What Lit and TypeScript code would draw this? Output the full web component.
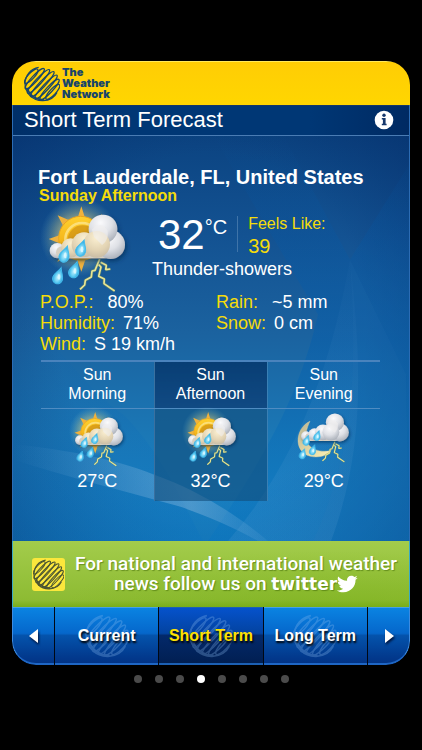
import { LitElement, html, css, svg } from "lit";
import { customElement, property, state } from "lit/decorators.js";
import { classMap } from "lit/directives/class-map.js";

/** Wire globe of the brand, drawn in the current text colour. */
@customElement("wire-globe")
class WireGlobe extends LitElement {
  static styles = css`
    :host { display: block; }
    svg { display: block; width: 100%; height: 100%; }
  `;
  private readonly coils = [
    [-40, 28], [-27, 41], [-13, 48], [1, 51], [15, 48], [28, 41], [40, 29],
  ];
  render() {
    return html`<svg viewBox="0 0 108 108" fill="none" stroke="currentColor" stroke-width="3.6" aria-hidden="true">
      <g transform="rotate(36 54 54)">
        ${this.coils.map(([d, r]) => svg`<ellipse cx=${54 + d} cy="54" rx="9" ry=${r} transform="rotate(7 ${54 + d} 54)"/>`)}
      </g>
      <path d="M3 52C4 82 26 105 57 104C78 103 92 93 99 79M3 52C4 28 20 8 44 4" stroke-width="4"/>
      <path d="M9 66C17 88 34 101 60 102" stroke-width="5"/>
    </svg>`;
  }
}

/** Thunder-shower picture, with a sun by day or a moon by night. */
@customElement("weather-icon")
class WeatherIcon extends LitElement {
  @property({ type: Boolean }) night = false;
  static styles = css`
    :host { display: block; }
    svg { display: block; width: 100%; height: 100%; overflow: visible; }
  `;
  private drop(x: number, y: number) {
    return svg`<path transform="translate(${x} ${y}) rotate(18)" d="M0 -27C5 -13 15 -5 15 7A15 16 0 0 1 -15 7C-15 -5 -5 -13 0 -27Z"
      fill="url(#rain)" stroke="#45bcec" stroke-width="3"/><ellipse cx="${x + 2}" cy="${y + 2}" rx="4" ry="9" fill="#e4faff" opacity=".8"/>`;
  }
  private sun() {
    return svg`
      <circle cx="178" cy="262" r="118" fill="url(#glow)"/>
      <path d="M184 170L196 208L172 208ZM113 197L146 211L130 230ZM86 268L118 257L118 281ZM112 336L128 302L148 321ZM184 366L170 324L198 324ZM246 194L235 228L218 212Z" fill="#f0b23c"/>
      <circle cx="182" cy="266" r="66" fill="url(#sun)" stroke="#e9a51e" stroke-width="3"/>
      <circle cx="186" cy="270" r="50" fill="none" stroke="#fbe58c" stroke-width="8" opacity=".8"/>
      <circle cx="188" cy="272" r="45" fill="#cf9214" opacity=".7"/>`;
  }
  private moon() {
    return svg`<path d="M131 213C55 248 50 375 150 382C190 384 222 370 231 352C180 364 130 346 116 310C106 285 115 245 131 213Z"
      fill="url(#moon)" stroke="#d8d0a0" stroke-width="2"/>`;
  }
  render() {
    const n = this.night;
    const front = n ? "puff" : "warm";
    const drops = n
      ? [[115, 305], [166, 283], [145, 350], [97, 369]]
      : [[134, 315], [184, 297], [115, 380], [163, 362]];
    const bolt = "M239 328L225 362L216 364L214 382L196 392L194 406L180 419M236 345L243 352L236 380L253 388L252 402L284 424M242 338L259 347L257 360L271 358";
    return html`<svg viewBox="60 160 270 270" role="img" aria-label="Thunder-showers">
      <defs>
        <radialGradient id="glow"><stop offset=".4" stop-color="#ffe680" stop-opacity=".6"/><stop offset=".7" stop-color="#c8d090" stop-opacity=".3"/><stop offset="1" stop-color="#7ac0d0" stop-opacity="0"/></radialGradient>
        <linearGradient id="sun" x1="0" y1="0" x2="0" y2="1"><stop stop-color="#ffd02e"/><stop offset="1" stop-color="#eda20c"/></linearGradient>
        <linearGradient id="moon" x1="0" y1="0" x2="1" y2="1"><stop stop-color="#b9b391"/><stop offset="1" stop-color="#fff3b6"/></linearGradient>
        <radialGradient id="puff" cx=".42" cy=".28" r=".78"><stop stop-color="#fafafc"/><stop offset=".5" stop-color="#dfe1e6"/><stop offset="1" stop-color="#a4aab4"/></radialGradient>
        <radialGradient id="warm" cx=".5" cy=".25" r=".8"><stop stop-color="#fbf0d2"/><stop offset=".6" stop-color="#e2d3b3"/><stop offset="1" stop-color="#c4b8a2"/></radialGradient>
        <radialGradient id="rain" cx=".5" cy=".6" r=".6"><stop stop-color="#c9f4ff"/><stop offset=".55" stop-color="#5bc9f1"/><stop offset="1" stop-color="#1b96d4"/></radialGradient>
        <filter id="shade" x="-30%" y="-30%" width="160%" height="170%"><feDropShadow dx="5" dy="7" stdDeviation="7" flood-color="#042a52" flood-opacity=".65"/></filter>
      </defs>
      ${n ? this.moon() : this.sun()}
      <g transform=${n ? "translate(10 -18)" : "translate(0 0)"}>
        <path d=${bolt} fill="none" stroke="#7f9a55" stroke-width="9" stroke-linejoin="bevel" opacity=".5"/>
        <path d=${bolt} fill="none" stroke="#ebe694" stroke-width="5" stroke-linejoin="bevel"/>
      </g>
      <g filter="url(#shade)" transform=${n ? "translate(0 -19)" : "translate(0 0)"}>
        <circle cx="112" cy="303" r="23" fill="url(#puff)"/>
        <rect x="108" y="290" width="166" height="36" rx="18" fill="#d5cfc2"/>
        <circle cx="152" cy="295" r="29" fill=${`url(#${front})`}/>
        <circle cx="192" cy="285" r="37" fill=${`url(#${front})`}/>
        <circle cx="272" cy="285" r="43" fill="url(#puff)"/>
        <circle cx="249" cy="238" r="43" fill="url(#puff)"/>
        <circle cx="230" cy="284" r="40" fill=${`url(#${front})`}/>
        <path d="M216 240C228 222 249 220 262 242C268 262 256 280 246 286L222 262Z" fill="#f0efee" opacity=".6"/>
      </g>
      ${drops.map(([x, y]) => this.drop(x, y))}
    </svg>`;
  }
}

interface Period { day: string; part: string; temp: string; night?: boolean }

@customElement("app-root")
class AppRoot extends LitElement {
  @state() private tab = "Short Term";

  private readonly tabs = ["Current", "Short Term", "Long Term"];
  private readonly periods: Period[] = [
    { day: "Sun", part: "Morning", temp: "27°C" },
    { day: "Sun", part: "Afternoon", temp: "32°C" },
    { day: "Sun", part: "Evening", temp: "29°C", night: true },
  ];

  static styles = css`
    :host {
      display: block;
      box-sizing: border-box;
      min-height: 100vh;
      padding: 61px 12px 20px;
      background: #000;
      color: #fff;
      font-family: "Liberation Sans", Arial, Helvetica, sans-serif;
    }
    * { box-sizing: border-box; }
    h1, h2, p, dl, dd { margin: 0; }
    button { margin: 0; padding: 0; border: 0; font: inherit; color: inherit; cursor: pointer; }

    .card { border-radius: 24px; overflow: hidden; background: #000; }
    .brand {
      display: flex;
      align-items: center;
      gap: 2px;
      height: 44px;
      padding: 0 12px;
      color: #17456b;
      background: linear-gradient(#ffcd05, #ffd600);
      border-top: 1px solid #ffe95c;
    }
    .brand-globe { width: 36px; height: 36px; }
    .brand-name { font: 900 11px/11px Inter, sans-serif; }
    .brand-name span { display: block; }

    .screen {
      position: relative;
      border: solid #2c6cb4;
      border-width: 0 1px;
      background:
        radial-gradient(ellipse at 50% 50%, rgba(0, 30, 90, 0) 55%, rgba(0, 30, 90, .4) 100%),
        linear-gradient(#093f7c, #135292 30%, #1b629f 52%, #1b78b6 76%, #1785c9 100%);
    }
    .waves { position: absolute; inset: 0; width: 100%; height: 100%; }
    .title {
      position: relative;
      display: flex;
      align-items: center;
      justify-content: space-between;
      height: 31px;
      padding: 0 15px 2px 11px;
      background: linear-gradient(90deg, #002f68, #003775 30%, #003775 75%, #002a62);
      border-top: 1px solid #12366a;
      border-bottom: 1px solid #4a7cb4;
    }
    .title h1 { font-size: 22px; line-height: 26px; font-weight: 400; }
    .info { width: 20px; height: 20px; background: none; }
    .info svg { display: block; }

    .report { position: relative; padding: 31px 28px 40px 25px; }
    .place { font-size: 20px; line-height: 20px; font-weight: 700; white-space: nowrap; }
    .yellow { color: #f5dc0a; }
    .when { padding-left: 1px; font-size: 16px; line-height: 18px; font-weight: 700; }
    .now { display: flex; gap: 22px; height: 87px; padding-left: 2px; }
    .now-icon { width: 90px; height: 90px; margin-top: -2px; }
    .now-data { padding-top: 6px; }
    .now-row { display: flex; padding-left: 6px; }
    .degrees { display: flex; font-size: 42px; line-height: 48px; }
    .unit { font-size: 20px; line-height: 32px; }
    .feels {
      margin-left: 10px;
      margin-top: 5px;
      padding-left: 10px;
      height: 36px;
      border-left: 1px solid #3f74a9;
      font-size: 16px;
      line-height: 16px;
      white-space: nowrap;
    }
    .feels strong { display: block; font-size: 20px; line-height: 28px; font-weight: 400; }
    .sky { font-size: 18px; line-height: 20px; }

    .facts { display: grid; grid-template-columns: 177fr 166fr; padding-left: 2px; font-size: 18px; line-height: 21px; }
    .fact { display: flex; gap: 8px; white-space: nowrap; }
    .fact.wide { gap: 14px; }

    .periods-wrap { padding: 0 1px 0 3px; }
    .periods { width: 100%; margin-top: 5px; table-layout: fixed; border-collapse: collapse; text-align: center; }
    .periods th {
      padding: 3px 0 5px;
      border-top: 2px solid #4a83bd;
      border-bottom: 1px solid #4f8cc2;
      font-size: 16px;
      line-height: 19px;
      font-weight: 400;
    }
    .periods th span { display: block; }
    .periods td { padding: 1px 0 9px; font-size: 18px; line-height: 21px; }
    .periods weather-icon { width: 57px; height: 57px; margin: 0 auto 4px; }
    .periods .on { border-left: 1px solid #3a709f; border-right: 1px solid #3a80b4; }
    .periods th.on { background: linear-gradient(#083e74, #104a83); }
    .periods td.on { background: rgba(18, 76, 122, .6); }

    .promo {
      display: flex;
      align-items: center;
      gap: 10px;
      min-height: 66px;
      padding: 0 12px 0 19px;
      border: 1px solid #39a9c4;
      border-width: 0 1px;
      color: #fff;
      text-decoration: none;
      background: radial-gradient(ellipse at 80% 100%, rgba(120, 175, 20, .4), rgba(150, 200, 60, 0) 60%), linear-gradient(#a3cc4b, #8dbb33 90%, #78ad1c);
    }
    .promo-logo { flex: none; width: 33px; height: 33px; padding: 1px; border-radius: 3px; color: #4a5532; background: #fbe73c; }
    .promo-text {
      flex: 1;
      text-align: center;
      font: 500 19px/20px Roboto, sans-serif;
      text-shadow: 1px 1px 1px rgba(70, 110, 10, .6);
      white-space: nowrap;
    }
    .twitter { font: 700 17px/20px "DejaVu Sans", sans-serif; }
    .bird { width: 22px; height: 18px; vertical-align: -3px; margin-left: -1px; }

    .tabs { display: grid; grid-template-columns: 42px 1fr 1fr 1fr 42px; gap: 1px; background: #000814; }
    .tab {
      display: grid;
      place-items: center;
      height: 58px;
      background: linear-gradient(#0a83e2, #0567cb 46%, #0453ac 50%, #023a8e 88%, #023385);
      border-top: 1px solid #45a0e6;
      border-bottom: 2px solid #1e66c4;
      font-size: 16px;
      line-height: 20px;
      font-weight: 700;
      text-shadow: 1px 2px 2px #000;
      white-space: nowrap;
    }
    .tab > * { grid-area: 1 / 1; }
    .tab wire-globe { width: 44px; height: 44px; color: #8cbcf0; opacity: .3; }
    .label { position: relative; }
    .tab.on { color: #ffe100; background: linear-gradient(#0552cc, #0343a0 46%, #03296a 50%, #011f52); border-color: #1c60b4; }
    .tab.prev { border-radius: 0 0 0 24px; border-left: 1px solid #3d8be0; }
    .tab.next { border-radius: 0 0 24px 0; border-right: 1px solid #3d8be0; }
    .tab svg { filter: drop-shadow(1px 2px 1px #00153f); }

    .pages { display: flex; justify-content: center; gap: 13px; padding-top: 10px; }
    .page { width: 8px; height: 8px; border-radius: 50%; background: #4b4b4b; }
    .page.on { background: #fff; }
  `;

  private fact(name: string, value: string, wide = false) {
    return html`<div class=${classMap({ fact: true, wide })}><dt class="yellow">${name}</dt><dd>${value}</dd></div>`;
  }

  render() {
    return html`
      <main class="card">
        <header class="brand">
          <wire-globe class="brand-globe"></wire-globe>
          <div class="brand-name"><span>The</span><span>Weather</span><span>Network</span></div>
        </header>
        <div class="screen">
          <svg class="waves" viewBox="0 0 396 437" preserveAspectRatio="none" aria-hidden="true">
            <defs>
              <linearGradient id="ray" x1="0" y1="0" x2="0" y2="1"><stop stop-color="#0058a8" stop-opacity="0"/><stop offset=".5" stop-color="#005cae" stop-opacity=".4"/><stop offset="1" stop-color="#0074c4" stop-opacity=".25"/></linearGradient>
              <linearGradient id="sheen" x1="0" y1="0" x2="1" y2="0"><stop stop-color="#8fc0e8" stop-opacity="0"/><stop offset=".7" stop-color="#a9c8e6" stop-opacity=".35"/><stop offset="1" stop-color="#8fc0e8" stop-opacity=".08"/></linearGradient>
              <linearGradient id="left" x1="0" y1="0" x2="1" y2="1"><stop stop-color="#0a5cae" stop-opacity="0"/><stop offset="1" stop-color="#0a74c0" stop-opacity=".3"/></linearGradient>
              <linearGradient id="veil" x1="0" y1="0" x2="0" y2="1"><stop stop-color="#7fb4e0" stop-opacity=".02"/><stop offset="1" stop-color="#7fb4e0" stop-opacity=".12"/></linearGradient>
            </defs>
            <path d="M200 30L305 210C285 300 240 370 195 437L396 437L396 60L337 155L270 30Z" fill="url(#ray)"/>
            <path d="M337 155L393 270L396 437L300 437C340 350 345 270 337 155Z" fill="#2a70b4" opacity=".14"/>
            <path d="M0 190C40 240 80 290 110 310C150 350 170 400 190 437L0 437Z" fill="url(#left)"/>
            <path d="M0 355C50 372 105 385 165 402C190 410 222 424 245 437L255 437C225 412 190 388 140 370C100 354 50 345 0 340Z" fill="url(#sheen)"/>
            <path d="M337 155C350 270 350 350 318 437L215 437C290 350 320 250 337 155Z" fill="url(#veil)"/>
          </svg>
          <div class="title">
            <h1>Short Term Forecast</h1>
            <button class="info" aria-label="Information">
              <svg width="20" height="20" viewBox="0 0 20 20" aria-hidden="true">
                <circle cx="10" cy="10" r="9.3" fill="#fff"/>
                <circle cx="10" cy="5.2" r="1.7" fill="#16386c"/>
                <path d="M7.8 8H11.6V13.8H12.6V15.3H7.8V13.8H8.9V9.5H7.8Z" fill="#16386c"/>
              </svg>
            </button>
          </div>
          <section class="report">
            <h2 class="place">Fort Lauderdale, FL, United States</h2>
            <p class="when yellow">Sunday Afternoon</p>
            <div class="now">
              <weather-icon class="now-icon"></weather-icon>
              <div class="now-data">
                <div class="now-row">
                  <div class="degrees">32<span class="unit">°C</span></div>
                  <div class="feels yellow">Feels Like:<strong>39</strong></div>
                </div>
                <p class="sky">Thunder-showers</p>
              </div>
            </div>
            <dl class="facts">
              ${this.fact("P.O.P.:", "80%", true)}${this.fact("Rain:", "~5 mm", true)}
              ${this.fact("Humidity:", "71%")}${this.fact("Snow:", "0 cm")}
              ${this.fact("Wind:", "S 19 km/h")}
            </dl>
            <div class="periods-wrap">
              <table class="periods">
                <thead><tr>${this.periods.map((p, i) => html`
                  <th scope="col" class=${classMap({ on: i === 1 })}><span>${p.day}</span><span>${p.part}</span></th>`)}</tr></thead>
                <tbody><tr>${this.periods.map((p, i) => html`
                  <td class=${classMap({ on: i === 1 })}><weather-icon ?night=${p.night}></weather-icon>${p.temp}</td>`)}</tr></tbody>
              </table>
            </div>
          </section>
        </div>
        <a class="promo" href="#twitter">
          <wire-globe class="promo-logo"></wire-globe>
          <span class="promo-text">For national and international weather<br>news follow us on <span class="twitter">twitter</span><svg class="bird" viewBox="0 2 24 20" preserveAspectRatio="none" fill="#fff" aria-hidden="true"><path d="M23.643 4.937c-.835.37-1.732.62-2.675.733.962-.576 1.7-1.49 2.048-2.578-.9.534-1.897.922-2.958 1.13-.85-.904-2.06-1.47-3.4-1.47-2.572 0-4.658 2.086-4.658 4.66 0 .364.042.718.12 1.06-3.873-.195-7.304-2.05-9.602-4.868-.4.69-.63 1.49-.63 2.342 0 1.616.823 3.043 2.072 3.878-.764-.025-1.482-.234-2.11-.583v.06c0 2.257 1.605 4.14 3.737 4.568-.392.106-.803.162-1.227.162-.3 0-.593-.028-.877-.082.593 1.85 2.313 3.198 4.352 3.234-1.595 1.25-3.604 1.995-5.786 1.995-.376 0-.747-.022-1.112-.065 2.062 1.323 4.51 2.093 7.14 2.093 8.57 0 13.255-7.098 13.255-13.254 0-.2-.005-.402-.014-.602.91-.658 1.7-1.477 2.323-2.41z"/></svg></span>
        </a>
        <nav class="tabs">
          <button class="tab prev" aria-label="Previous"><svg width="10" height="14" viewBox="0 0 10 14" aria-hidden="true"><path d="M9 0V14L0 7Z" fill="#fff"/></svg></button>
          ${this.tabs.map((t) => html`
            <button class=${classMap({ tab: true, on: t === this.tab })} @click=${() => (this.tab = t)}>
              <wire-globe></wire-globe><span class="label">${t}</span>
            </button>`)}
          <button class="tab next" aria-label="Next"><svg width="10" height="14" viewBox="0 0 10 14" aria-hidden="true"><path d="M1 0V14L10 7Z" fill="#fff"/></svg></button>
        </nav>
      </main>
      <div class="pages">
        ${Array.from({ length: 8 }, (_, i) => html`<button class=${classMap({ page: true, on: i === 3 })} aria-label=${`Page ${i + 1}`}></button>`)}
      </div>
    `;
  }
}
